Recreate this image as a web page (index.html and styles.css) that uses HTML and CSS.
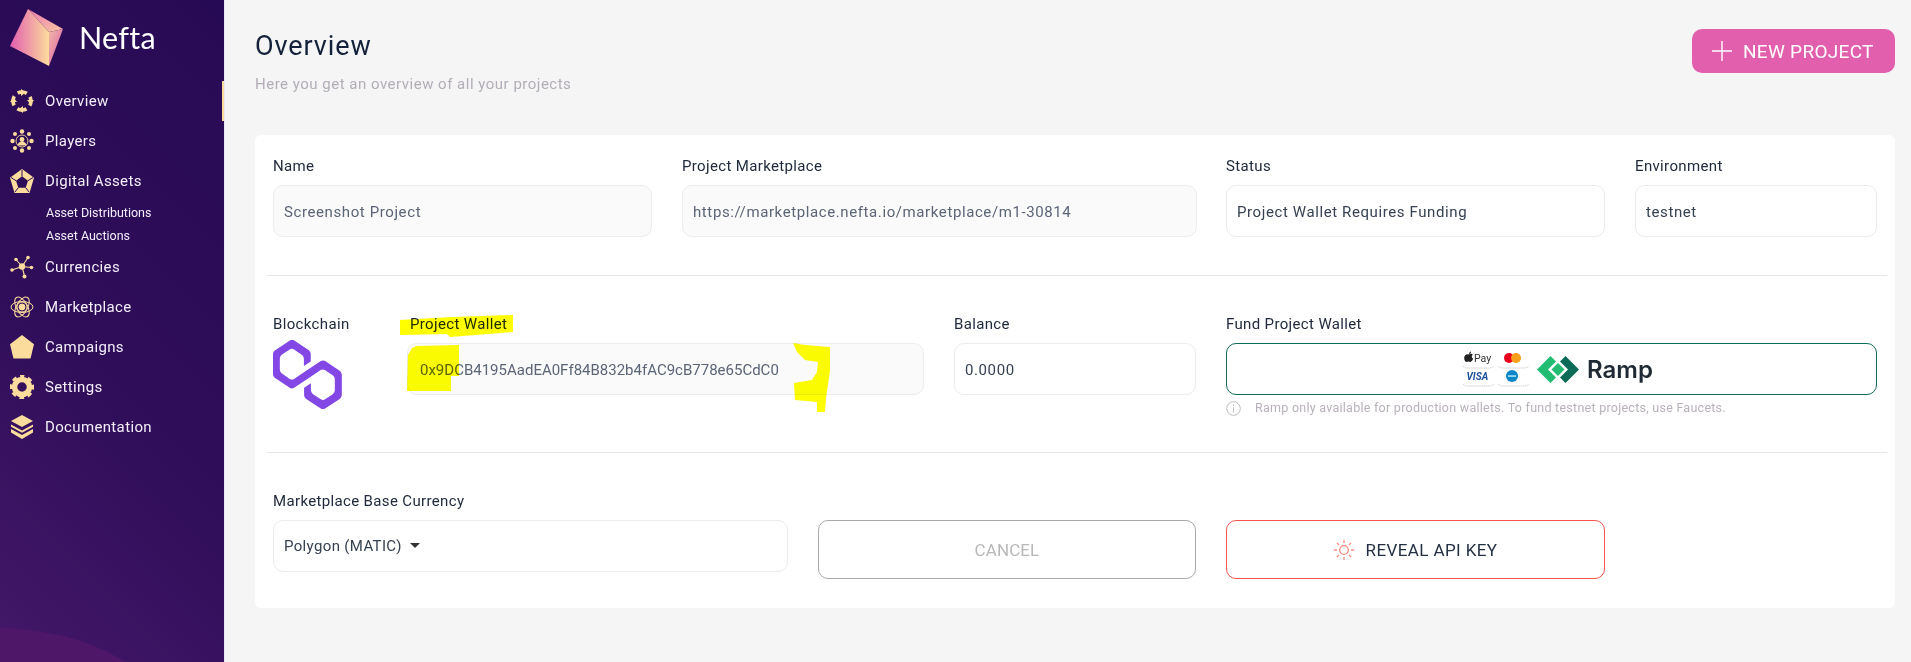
FILE: index.html
```html
<!DOCTYPE html>
<html lang="en">
<head>
<meta charset="utf-8">
<title>Nefta - Overview</title>
<link rel="stylesheet" href="styles.css">
</head>
<body>
<div class="app">
  <aside class="sidebar">
    <div class="brand">
      <svg class="logo" viewBox="0 0 70 70">
        <defs>
          <linearGradient id="lg1" x1="0" x2="1" y1="0" y2="0"><stop offset="0" stop-color="#e25eb0"/><stop offset="1" stop-color="#fcdb9c"/></linearGradient>
          <linearGradient id="lg2" x1="0" x2="1" y1="0" y2="1"><stop offset="0" stop-color="#e97ab0"/><stop offset="1" stop-color="#f8c6a2"/></linearGradient>
          <linearGradient id="lg3" x1="0" x2="1" y1="0" y2="1"><stop offset="0" stop-color="#f0b9a4"/><stop offset="1" stop-color="#dc58ae"/></linearGradient>
        </defs>
        <polygon points="28,9 10,46 49,66 49,32" fill="url(#lg1)"/>
        <polygon points="28,9 63,29 49,32" fill="url(#lg2)"/>
        <polygon points="63,29 49,32 49,66" fill="url(#lg3)"/>
      </svg>
      <span class="wordmark">Nefta</span>
    </div>
    <nav class="nav">
      <a class="nav-item active">
        <svg class="ico" viewBox="0 0 24 24"><circle cx="12" cy="12" r="9" fill="none" stroke="#fbdc9c" stroke-width="3.600" stroke-dasharray="9.500 4.637" stroke-dashoffset="-9.400"/><path d="M11 0l4.500 3.500L11 7zM24 11l-3.500 4.500L17 11zM13 24l-4.500-3.500L13 17zM0 13l3.500-4.500L7 13z" fill="#fbdc9c"/></svg>
        <span>Overview</span>
      </a>
      <a class="nav-item">
        <svg class="ico" viewBox="0 0 24 24" fill="#fbdc9c"><circle cx="12" cy="2.500" r="2.200"/><circle cx="12" cy="21.500" r="2.200"/><circle cx="2.500" cy="12" r="2.200"/><circle cx="21.500" cy="12" r="2.200"/><circle cx="5" cy="5" r="2"/><circle cx="19" cy="5" r="2"/><circle cx="5" cy="19" r="2"/><circle cx="19" cy="19" r="2"/><circle cx="12" cy="10.500" r="2.400"/><path d="M7.500 16.500a4.500 4 0 0 1 9 0z"/><circle cx="12" cy="12" r="6" fill="none" stroke="#fbdc9c" stroke-width=".9"/></svg>
        <span>Players</span>
      </a>
      <a class="nav-item">
        <svg class="ico" viewBox="0 0 24 24"><path fill="#fbdc9c" fill-rule="evenodd" d="M12 0l12 8.800L19.500 24h-15L0 8.800zM12 7.300l-6 4.400 2.300 7h7.400l2.300-7z"/><path d="M12 7.300V1M6 11.700L1 8.500M18 11.700l5-3.200M8.300 18.700L5 23M15.700 18.700L19 23" stroke="#2d0d5a" stroke-width="1"/></svg>
        <span>Digital Assets</span>
      </a>
      <a class="sub-item">Asset Distributions</a>
      <a class="sub-item">Asset Auctions</a>
      <a class="nav-item">
        <svg class="ico" viewBox="0 0 24 24" fill="#fbdc9c" stroke="#fbdc9c"><g stroke-width="1.100"><path d="M12 11.500L6 4.500M12 11.500L18 2.500M12 11.500L2 15M12 11.500L21 12.500M12 11.500L14.500 21"/></g><circle cx="12" cy="11.500" r="3.200" stroke="none"/><circle cx="6" cy="4.500" r="1.800" stroke="none"/><circle cx="18" cy="2.500" r="1.800" stroke="none"/><circle cx="2" cy="15" r="1.800" stroke="none"/><circle cx="21.500" cy="12.500" r="1.800" stroke="none"/><circle cx="14.500" cy="21.500" r="2" stroke="none"/></svg>
        <span>Currencies</span>
      </a>
      <a class="nav-item">
        <svg class="ico" viewBox="0 0 24 24" fill="none" stroke="#fbdc9c" stroke-width="1"><ellipse cx="12" cy="12" rx="11" ry="5.500"/><ellipse cx="12" cy="12" rx="11" ry="5.500" transform="rotate(60 12 12)"/><ellipse cx="12" cy="12" rx="11" ry="5.500" transform="rotate(120 12 12)"/><circle cx="12" cy="12" r="3" fill="#fbdc9c"/><circle cx="12" cy="12" r="5"/></svg>
        <span>Marketplace</span>
      </a>
      <a class="nav-item">
        <svg class="ico" viewBox="0 0 24 24" fill="#fbdc9c"><path d="M12 0l12 9.200-3.500 14.300h-17L0 9.200z"/></svg>
        <span>Campaigns</span>
      </a>
      <a class="nav-item">
        <svg class="ico" viewBox="0 0 24 24" fill="none" stroke="#fbdc9c"><circle cx="12" cy="12" r="7.500" stroke-width="5.500"/><circle cx="12" cy="12" r="10.500" stroke-width="3.400" stroke-dasharray="4.500 3.746" stroke-dashoffset="2.250" transform="rotate(-90 12 12)"/></svg>
        <span>Settings</span>
      </a>
      <a class="nav-item">
        <svg class="ico" viewBox="0 0 24 24" fill="#fbdc9c"><path d="M12 0l11 6-11 6L1 6z"/><path d="M1 9.500l11 6 11-6v2.300l-11 6-11-6z"/><path d="M1 14l11 6 11-6v3.500l-11 6.500-11-6.500z"/></svg>
        <span>Documentation</span>
      </a>
    </nav>
  </aside>

  <main class="main">
    <header class="top">
      <div>
        <h1 class="title">Overview</h1>
        <p class="subtitle">Here you get an overview of all your projects</p>
      </div>
      <button class="btn-new">
        <svg width="20" height="20" viewBox="0 0 20 20" stroke="#fff" stroke-width="1.400"><path d="M10 0v20M0 10h20"/></svg>
        <span>NEW PROJECT</span>
      </button>
    </header>

    <section class="card">
      <div class="row">
        <div class="field w-name"><label class="lbl">Name</label><div class="input ro">Screenshot Project</div></div>
        <div class="field w-market"><label class="lbl">Project Marketplace</label><div class="input ro">https://marketplace.nefta.io/marketplace/m1-30814</div></div>
        <div class="field w-status"><label class="lbl">Status</label><div class="input">Project Wallet Requires Funding</div></div>
        <div class="field w-env"><label class="lbl">Environment</label><div class="input">testnet</div></div>
      </div>
      <hr class="sep">
      <div class="row row-wallet">
        <div class="field w-chain">
          <label class="lbl">Blockchain</label>
          <svg class="polygon" viewBox="0 0 38.400 33.500" preserveAspectRatio="none"><path fill="#8247e5" d="M29,10.200c-0.700-0.400-1.600-0.400-2.400,0L21,13.500l-3.800,2.100l-5.500,3.300c-0.700,0.400-1.600,0.400-2.400,0L5,16.300c-0.700-0.400-1.200-1.200-1.200-2.100v-5c0-0.800,0.400-1.600,1.200-2.100l4.300-2.500c0.700-0.400,1.600-0.400,2.400,0L16,7.200c0.700,0.400,1.200,1.200,1.200,2.100v3.300l3.800-2.200V7c0-0.800-0.400-1.600-1.200-2.100l-8-4.700c-0.700-0.400-1.600-0.400-2.400,0L1.200,5C0.400,5.400,0,6.200,0,7v9.400c0,0.800,0.400,1.600,1.200,2.100l8.100,4.700c0.700,0.400,1.600,0.400,2.400,0l5.500-3.200l3.800-2.200l5.500-3.200c0.700-0.400,1.600-0.400,2.400,0l4.300,2.500c0.700,0.400,1.200,1.200,1.200,2.100v5c0,0.800-0.400,1.600-1.200,2.100L29,28.800c-0.700,0.400-1.600,0.400-2.400,0l-4.300-2.500c-0.700-0.400-1.200-1.200-1.200-2.100V21l-3.800,2.200v3.300c0,0.800,0.400,1.600,1.200,2.100l8.100,4.700c0.700,0.400,1.600,0.400,2.400,0l8.100-4.700c0.700-0.400,1.200-1.200,1.200-2.100V17c0-0.800-0.400-1.600-1.200-2.100L29,10.200z"/></svg>
        </div>
        <div class="field w-wallet"><label class="lbl lbl-wallet">Project Wallet</label><div class="input ro wallet-val">0x9DCB4195AadEA0Ff84B832b4fAC9cB778e65CdC0</div></div>
        <div class="field w-balance"><label class="lbl">Balance</label><div class="input">0.0000</div></div>
        <div class="field w-fund">
          <label class="lbl">Fund Project Wallet</label>
          <div class="ramp">
            <svg class="paycards" width="68" height="36" viewBox="0 0 68 36">
              <g fill="none" stroke="#c4c4c4" stroke-width=".8" stroke-dasharray="1.500 .6"><path d="M1 15q2 2 5 2h21q3 0 5-2M36 15q2 2 5 2h21q3 0 5-2M1 33q2 2 5 2h21q3 0 5-2M36 33q2 2 5 2h21q3 0 5-2"/></g>
              <path d="M7 3.500c1-1.200 3.200-.8 3.800.2-1.600 1-1.300 3.200.4 3.900-.6 1.700-1.600 3.400-2.800 3.400-.9 0-1.200-.5-2-.5s-1.200.5-2 .5C3 11 2 8.500 2.200 6.600 2.400 4 5 2.800 7 3.500zM7 3c-.1-1.300.8-2.400 2-2.600.1 1.300-.8 2.500-2 2.600z" fill="#222"/>
              <text class="pay-txt" x="12" y="11">Pay</text>
              <circle cx="47" cy="7" r="5" fill="#eb001b"/><circle cx="54" cy="7" r="5" fill="#f79e1b"/>
              <text class="visa-txt" x="4.500" y="29">VISA</text>
              <circle cx="50" cy="25" r="6" fill="#0a87c8"/><rect x="46" y="24.300" width="8" height="1.500" fill="#bfe6f7"/>
            </svg>
            <svg class="diamonds" width="42" height="27" viewBox="0 0 42 27">
              <path d="M13.500 0l5.500 5.500-8 8 8 8-5.500 5.500L0 13.500z" fill="#22bd72"/>
              <path d="M28.500 0L42 13.500 28.500 27 23 21.500l8-8-8-8z" fill="#0b6b56"/>
              <path d="M21 7l6.500 6.500L21 20l-6.500-6.500z" fill="#22bd72"/>
            </svg>
            <span class="ramp-txt">Ramp</span>
          </div>
          <p class="note">
            <svg width="15" height="15" viewBox="0 0 15 15" fill="none" stroke="#bcbcbc"><circle cx="7.500" cy="7.500" r="6.800"/><path d="M7.500 6.500v5M7.500 3.500v1.500"/></svg>
            <span>Ramp only available for production wallets. To fund testnet projects, use Faucets.</span>
          </p>
        </div>
      </div>
      <hr class="sep sep-b">
      <div class="row">
        <div class="field w-base"><label class="lbl">Marketplace Base Currency</label><div class="input select">Polygon (MATIC)<i class="caret"></i></div></div>
        <button class="btn btn-cancel">CANCEL</button>
        <button class="btn btn-reveal">
          <svg width="20" height="20" viewBox="0 0 20 20" fill="none" stroke="#fb8a80" stroke-width="1.300"><circle cx="10" cy="10" r="4.300"/><path d="M10 0v3M10 17v3M0 10h3M17 10h3M3 3l2 2M15 15l2 2M3 17l2-2M15 5l2-2"/></svg>
          <span>REVEAL API KEY</span>
        </button>
      </div>
    </section>
  </main>
</div>
<svg class="marks" width="1911" height="662" viewBox="0 0 1911 662" fill="#ffff00">
  <path d="M400 320l52-3 61-2v17l-63 5-3-3-47 1z"/>
  <path d="M412 348l4-2 43-1v31h-8v15h-44l1-36z"/>
  <path d="M793 343l12 2 25 2v24l-4 27-1 14h-8l0-10-22-2-1-17 18-3 5-8 1-10-13-2-8-8z"/>
</svg>
</body>
</html>
```
FILE: styles.css
```css
* { box-sizing: border-box; }
html, body { margin: 0; height: 100%; overflow: hidden; }
body { font-family: "Roboto", "Liberation Sans", sans-serif; color: #212b3d; background: #f5f5f5; }
.app { display: flex; height: 662px; }

.sidebar { position: relative; width: 225px; flex: none; overflow: hidden; border-right: 1px solid #e9e8f0; color: #f3eefa;
  background: linear-gradient(45deg, #431869 0%, #2f0d59 45%, #270a55 100%); }
.sidebar::after { content: ""; position: absolute; left: -178px; top: 628px; width: 346px; height: 200px; border-radius: 50%; background: #4e1767; }
.brand { height: 81px; display: flex; align-items: flex-start; }
.logo { flex: none; width: 70px; height: 70px; }
.wordmark { font-family: "Lato", sans-serif; font-size: 30.500px; font-weight: 400; color: #fff; margin: 17px 0 0 9px; line-height: 40px; letter-spacing: .3px; }
.nav { position: relative; z-index: 1; display: flex; flex-direction: column; }
.nav-item { position: relative; display: flex; align-items: center; gap: 11px; height: 40px; padding-left: 10px; font-size: 15px; letter-spacing: .35px; }
.nav-item.active::after { content: ""; position: absolute; right: 0; top: 0; bottom: 0; width: 2.500px; background: #fbdc9c; }
.ico { width: 24px; height: 24px; flex: none; }
.sub-item { display: block; font-size: 12.500px; height: 23px; line-height: 23px; padding-left: 46px; }

.main { flex: 1; padding: 29px 16px 0 30px; min-width: 0; }
.top { display: flex; justify-content: space-between; align-items: flex-start; height: 106px; }
.title { margin: 0; font-size: 27px; font-weight: 400; line-height: 34px; color: #14213a; letter-spacing: .9px; }
.subtitle { margin: 11px 0 0; font-size: 15px; line-height: 20px; color: #b3adb8; letter-spacing: .5px; }
.btn-new { display: flex; align-items: center; gap: 11px; width: 203px; height: 44px; padding: 0 0 0 20px; border: 0; border-radius: 10px; background: #e25fae; color: #fff; font: inherit; font-size: 19px; letter-spacing: .3px; }

.card { background: #fff; border-radius: 6px; width: 1640px; height: 473px; padding: 21px 16px 0 18px; }
.row { display: flex; }
.field { display: flex; flex-direction: column; flex: none; }
.lbl { font-size: 15px; line-height: 20px; margin-bottom: 9px; color: #212b3d; letter-spacing: .35px; }
.input { height: 52px; line-height: 52px; padding: 0 10px; border: 1px solid #ececec; border-radius: 10px; background: #fff; font-size: 15px; letter-spacing: .6px; color: #364152; white-space: nowrap; }
.input.ro { background: #fafafa; color: #5b6577; }
.wallet-val.input { letter-spacing: 0; padding-left: 12px; }
.lbl-wallet { padding-left: 3px; }
.w-name { width: 379px; margin-right: 30px; }
.w-market { width: 515px; margin-right: 29px; }
.w-status { width: 379px; margin-right: 30px; }
.w-env { width: 242px; }
.sep { margin: 38px 0; border: 0; border-top: 1px solid #e7e7e7; width: 1620px; margin-left: -6px; }
.sep-b { margin-top: 0; }
.w-chain { width: 134px; }
.polygon { width: 69px; height: 69px; margin-top: -3px; }
.w-wallet { width: 517px; margin-right: 30px; }
.w-balance { width: 242px; margin-right: 30px; }
.w-fund { width: 651px; }
.row-wallet { height: 138px; }
.ramp { height: 52px; border: 1px solid #0e6b58; border-radius: 10px; display: flex; align-items: center; padding-left: 235px; }
.paycards { flex: none; }
.diamonds { flex: none; margin-left: 7px; }
.pay-txt { font: 10.500px "Roboto", sans-serif; fill: #333; }
.visa-txt { font: italic 700 10px "Roboto", sans-serif; fill: #1a4f9c; }
.ramp-txt { font-family: "Inter", sans-serif; font-weight: 600; font-size: 24px; color: #1f2933; margin-left: 8px; }
.note { display: flex; align-items: center; gap: 14px; margin: 5px 0 0; font-size: 12.500px; line-height: 16px; color: #b8b0ba; letter-spacing: .26px; }
.w-base { width: 515px; margin-right: 30px; }
.select { display: flex; align-items: center; letter-spacing: .35px; }
.caret { width: 0; height: 0; margin-left: 8px; margin-top: -2px; border: 5px solid transparent; border-top-color: #333; border-bottom: 0; }
.btn { height: 59px; width: 379px; margin-top: 29px; border-radius: 10px; background: #fff; font: inherit; font-size: 17px; display: flex; align-items: center; justify-content: center; }
.btn-cancel { width: 378px; border: 1px solid #aaa; color: #b8b8b8; margin-right: 30px; letter-spacing: .1px; }
.btn-reveal { border: 1px solid #f9564c; color: #253044; gap: 12px; letter-spacing: .4px; }
.marks { position: absolute; left: 0; top: 0; mix-blend-mode: multiply; pointer-events: none; }
```
